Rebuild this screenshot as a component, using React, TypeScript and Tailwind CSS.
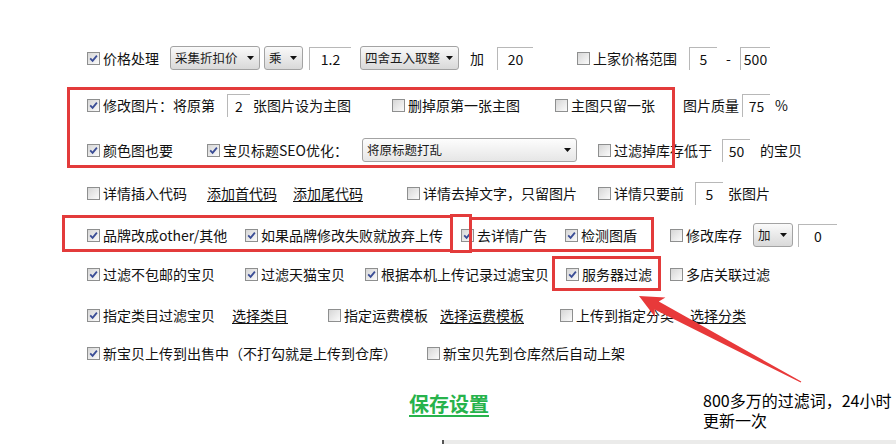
import React from "react";

function Cb({ on }: { on?: boolean }) {
  return (
    <span className="flex w-[13px] h-[13px] shrink-0 items-center justify-center border border-[#8e8f8f] bg-linear-to-br from-[#d6d6d6] to-[#fbfbfb]">
      {on && (
        <svg width="9" height="9" viewBox="0 0 9 9">
          <path d="M1.2 4.3 L3.6 6.8 L7.9 1.6" fill="none" stroke="#3a4d96" strokeWidth="1.8" />
        </svg>
      )}
    </span>
  );
}

function Check({ on, label, className = "" }: { on?: boolean; label: string; className?: string }) {
  return (
    <div className={"flex items-center shrink-0 " + className}>
      <Cb on={on} />
      <span className="ml-[3px] whitespace-nowrap">{label}</span>
    </div>
  );
}

function Sel({ label, className = "" }: { label: string; className?: string }) {
  return (
    <div
      className={
        "flex items-center justify-between shrink-0 h-[24px] rounded-[3px] border border-[#a3a3a3] bg-linear-to-b from-[#fafafa] to-[#d9d9d9] pl-[4px] pr-[5px] text-[12.5px] text-[#1a1a1a] " +
        className
      }
    >
      <span className="whitespace-nowrap">{label}</span>
      <svg width="7" height="4" viewBox="0 0 7 4" className="shrink-0">
        <path d="M0 0h7L3.5 4z" fill="#111" />
      </svg>
    </div>
  );
}

function Inp({ value, className = "" }: { value: string; className?: string }) {
  return (
    <div className={"flex items-center justify-center shrink-0 h-[23px] border-t border-l border-[#b8b8b8] bg-white " + className}>
      {value}
    </div>
  );
}

function Link({ label, className = "" }: { label: string; className?: string }) {
  return <span className={"underline underline-offset-2 shrink-0 whitespace-nowrap " + className}>{label}</span>;
}

export default function App() {
  return (
    <div className="relative w-[896px] h-[444px] overflow-hidden bg-white flex flex-col text-[14px] leading-[24px] text-[#111] font-['Noto_Sans_CJK_SC','Noto_Sans',sans-serif]">
      {/* Row 1 */}
      <div className="flex items-center h-[24px] pl-[87px] mt-[46px]">
        <Check on label="价格处理" className="w-[83px]" />
        <Sel label="采集折扣价" className="w-[90px]" />
        <Sel label="乘" className="w-[39px] ml-[4px]" />
        <Inp value="1.2" className="w-[42px] ml-[6px]" />
        <Sel label="四舍五入取整" className="w-[99px] ml-[9px]" />
        <span className="ml-[11px] w-[27px] shrink-0">加</span>
        <Inp value="20" className="w-[36px]" />
        <Check label="上家价格范围" className="ml-[44px] w-[112px]" />
        <Inp value="5" className="w-[28px]" />
        <span className="w-[23px] shrink-0 text-center">-</span>
        <Inp value="500" className="w-[30px]" />
      </div>

      {/* Row 2 */}
      <div className="flex items-center h-[24px] pl-[87px] mt-[23px]">
        <Check on label="修改图片：将原第" className="w-[140px]" />
        <Inp value="2" className="w-[23px]" />
        <span className="ml-[3px] w-[139px] shrink-0 whitespace-nowrap">张图片设为主图</span>
        <Check label="删掉原第一张主图" className="w-[163px]" />
        <Check label="主图只留一张" className="w-[128px]" />
        <span className="w-[59px] shrink-0 whitespace-nowrap">图片质量</span>
        <Inp value="75" className="w-[28px]" />
        <span className="ml-[5px]">%</span>
      </div>

      {/* Row 3 */}
      <div className="flex items-center h-[24px] pl-[87px] mt-[21px]">
        <Check on label="颜色图也要" className="w-[120px]" />
        <Check on label="宝贝标题SEO优化：" className="w-[155px]" />
        <Sel label="将原标题打乱" className="w-[215px] from-[#fdfdfd] to-[#e6e6e6]" />
        <Check label="过滤掉库存低于" className="ml-[21px] w-[124px]" />
        <Inp value="50" className="w-[28px]" />
        <span className="ml-[10px] whitespace-nowrap">的宝贝</span>
      </div>

      {/* Row 4 */}
      <div className="flex items-center h-[24px] pl-[87px] mt-[19px]">
        <Check label="详情插入代码" className="w-[120px]" />
        <Link label="添加首代码" className="w-[86px]" />
        <Link label="添加尾代码" className="w-[114px]" />
        <Check label="详情去掉文字，只留图片" className="w-[191px]" />
        <Check label="详情只要前" className="w-[97px]" />
        <Inp value="5" className="w-[28px]" />
        <span className="ml-[5px] whitespace-nowrap">张图片</span>
      </div>

      {/* Row 5 */}
      <div className="flex items-center h-[24px] pl-[87px] mt-[18px]">
        <Check on label="品牌改成other/其他" className="w-[158px]" />
        <Check on label="如果品牌修改失败就放弃上传" className="w-[216px]" />
        <Check on label="去详情广告" className="w-[104px]" />
        <Check on label="检测图盾" className="w-[105px]" />
        <Check label="修改库存" className="w-[83px]" />
        <Sel label="加" className="w-[40px] h-[23px]" />
        <Inp value="0" className="w-[39px] ml-[5px]" />
      </div>

      {/* Row 6 */}
      <div className="flex items-center h-[24px] pl-[87px] mt-[15px]">
        <Check on label="过滤不包邮的宝贝" className="w-[158px]" />
        <Check on label="过滤天猫宝贝" className="w-[120px]" />
        <Check on label="根据本机上传记录过滤宝贝" className="w-[201px]" />
        <Check on label="服务器过滤" className="w-[104px]" />
        <Check label="多店关联过滤" />
      </div>

      {/* Row 7 */}
      <div className="flex items-center h-[24px] pl-[87px] mt-[17px]">
        <Check on label="指定类目过滤宝贝" className="w-[145px]" />
        <Link label="选择类目" className="w-[96px]" />
        <Check label="指定运费模板" className="w-[112px]" />
        <Link label="选择运费模板" className="w-[120px]" />
        <Check label="上传到指定分类" className="w-[130px]" />
        <Link label="选择分类" />
      </div>

      {/* Row 8 */}
      <div className="flex items-center h-[24px] pl-[87px] mt-[14px]">
        <Check on label="新宝贝上传到出售中（不打勾就是上传到仓库）" className="w-[340px]" />
        <Check label="新宝贝先到仓库然后自动上架" />
      </div>

      {/* Save */}
      <div className="flex items-center h-[28px] pl-[409px] mt-[25px]">
        <span className="text-[20px] leading-[28px] font-bold underline underline-offset-[3px] text-[#27b34c]">保存设置</span>
      </div>

      {/* partial window at bottom */}
      <div className="mt-auto ml-[442px] h-[4px] bg-[#ebebea] border-l-2 border-[#555]" />

      {/* annotation boxes */}
      <div className="absolute left-[67px] top-[87px] w-[608px] h-[81px] border-[3px] border-[#e33b3b] pointer-events-none" />
      <div className="absolute left-[62px] top-[215px] w-[391px] h-[37px] border-[3px] border-[#e33b3b] pointer-events-none" />
      <div className="absolute left-[450px] top-[214px] w-[22px] h-[39px] border-[3px] border-[#e33b3b] pointer-events-none" />
      <div className="absolute left-[469px] top-[217px] w-[185px] h-[35px] border-[3px] border-[#e33b3b] pointer-events-none" />
      <div className="absolute left-[552px] top-[256px] w-[109px] h-[35px] border-[3px] border-[#e33b3b] pointer-events-none" />

      <svg className="absolute left-0 top-0 pointer-events-none" width="896" height="444" viewBox="0 0 896 444">
        <polygon
          points="639,296 665.4,297.6 658.8,301.4 801.3,381.5 800.7,382.5 654.6,309.4 655,317"
          fill="#e8393a"
        />
      </svg>

      <div className="absolute left-[703px] top-[390px] flex flex-col text-[16px] text-black whitespace-nowrap">
        <div className="h-[20px] leading-[20px]">800多万的过滤词，24小时</div>
        <div className="h-[20px] leading-[20px]">更新一次</div>
      </div>
    </div>
  );
}
